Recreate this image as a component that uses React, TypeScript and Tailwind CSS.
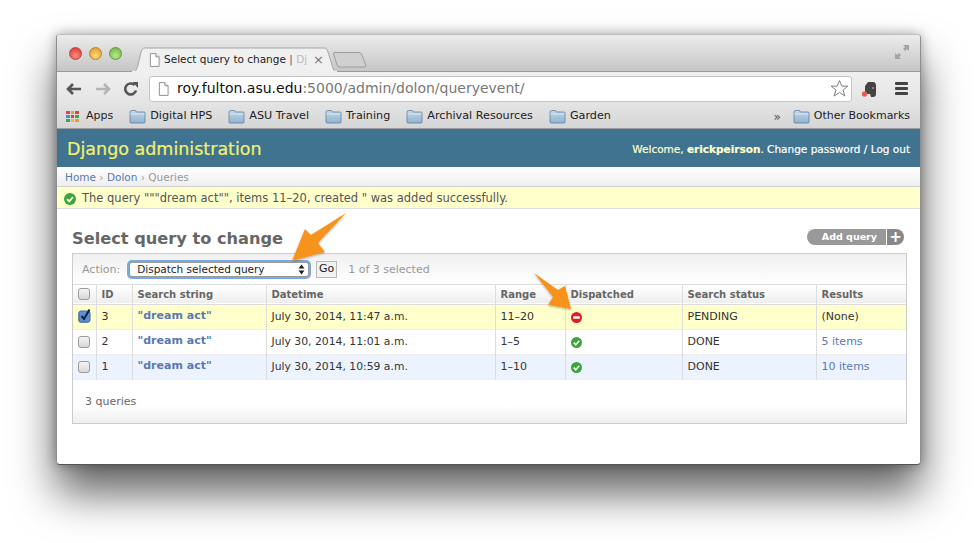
import React from "react";

const font = { fontFamily: '"DejaVu Sans", sans-serif' };

function Folder() {
  return (
    <svg width="17" height="15" viewBox="0 0 17 15" className="shrink-0">
      <defs>
        <linearGradient id="fg" x1="0" y1="0" x2="0" y2="1">
          <stop offset="0" stopColor="#c4d8ea" />
          <stop offset="1" stopColor="#8fb3d2" />
        </linearGradient>
      </defs>
      <path d="M1 3.5Q1 1.5 2.5 1.5H6Q7 1.5 7.5 3H15Q16 3 16 4V13Q16 14 15 14H2Q1 14 1 13Z" fill="url(#fg)" stroke="#5f7f9c" strokeWidth="0.8" />
      <path d="M1.5 5H15.5" stroke="#e4eef6" strokeWidth="0.8" />
    </svg>
  );
}

function Doc({ w = 12, h = 15 }: { w?: number; h?: number }) {
  return (
    <svg width={w} height={h} viewBox="0 0 12 15" className="shrink-0">
      <path d="M1.5 .5H7.5L11 4V14.5H1.5Z" fill="#fff" stroke="#8a8a8a" />
      <path d="M7.5 .5V4H11" fill="#eee" stroke="#8a8a8a" />
    </svg>
  );
}

function Ok({ s = 11 }: { s?: number }) {
  return (
    <svg width={s} height={s} viewBox="0 0 12 12" className="shrink-0">
      <circle cx="6" cy="6" r="6" fill="#3aa63a" />
      <path d="M3 6.2L5.2 8.4L9 4" fill="none" stroke="#fff" strokeWidth="1.8" />
    </svg>
  );
}

function No() {
  return (
    <svg width="11" height="11" viewBox="0 0 12 12" className="shrink-0">
      <circle cx="6" cy="6" r="6" fill="#dc2027" />
      <rect x="2.4" y="4.7" width="7.2" height="2.6" fill="#fff" />
    </svg>
  );
}

function Check({ on }: { on?: boolean }) {
  return (
    <span className="relative block w-[12px] h-[12px] rounded-[3px] border border-[#9a9a9a] bg-gradient-to-b from-[#f6f6f6] to-[#d8d8d8]">
      {on && (
        <svg width="16" height="16" viewBox="0 0 16 16" className="absolute left-[-2px] top-[-5px]">
          <rect x="2" y="4" width="11" height="11" rx="2" fill="#5b93d8" stroke="#3a6ea8" />
          <path d="M4.5 9L7 12L12.5 2.5" fill="none" stroke="#10243c" strokeWidth="2" />
        </svg>
      )}
    </span>
  );
}

const cols = [
  "w-[23px]",
  "w-[36px]",
  "w-[134px]",
  "w-[229px]",
  "w-[70px]",
  "w-[117px]",
  "w-[134px]",
  "w-[90px]",
];

const rows = [
  { id: "3", date: "July 30, 2014, 11:47 a.m.", range: "11–20", ok: false, status: "PENDING", res: "(None)", bg: "bg-[#ffffcc]", on: true, link: false },
  { id: "2", date: "July 30, 2014, 11:01 a.m.", range: "1–5", ok: true, status: "DONE", res: "5 items", bg: "bg-white", on: false, link: true },
  { id: "1", date: "July 30, 2014, 10:59 a.m.", range: "1–10", ok: true, status: "DONE", res: "10 items", bg: "bg-[#edf3fe]", on: false, link: true },
];

const bookmarks = ["Digital HPS", "ASU Travel", "Training", "Archival Resources", "Garden"];

export default function App() {
  return (
    <div className="relative w-[977px] h-[543px] overflow-hidden bg-white text-[11px] text-[#333]" style={font}>
      <div className="absolute left-[56px] top-[34px] w-[865px] h-[431px] rounded-[4px] bg-white shadow-[0_28px_44px_rgba(0,0,0,0.62),0_0_12px_rgba(0,0,0,0.32)] border border-[#8e8e8e] border-t-[#bdbdbd] border-b-[#555] flex flex-col overflow-hidden">
        {/* Tab strip */}
        <div className="h-[37px] shrink-0 flex items-end relative bg-gradient-to-b from-[#ececec] to-[#c6c6c6] border-b border-[#9a9a9a]">
          <div className="flex gap-[7px] mb-[11px] ml-[12px] items-center">
            <span className="w-[13px] h-[13px] rounded-full border border-[#b04a45] bg-[radial-gradient(circle_at_50%_70%,#ff8a80,#d5322c)]" />
            <span className="w-[13px] h-[13px] rounded-full border border-[#b5862c] bg-[radial-gradient(circle_at_50%_70%,#ffd97a,#d8932a)]" />
            <span className="w-[13px] h-[13px] rounded-full border border-[#5c9a3c] bg-[radial-gradient(circle_at_50%_70%,#b8e890,#6cae42)]" />
          </div>
          <div className="relative ml-[10px] w-[205px] h-[25px] mb-[-1px] flex items-center pl-[17px] text-[10.5px] text-[#222] z-10">
            <svg width="205" height="25" viewBox="0 0 205 25" className="absolute left-0 top-0">
              <path d="M0 25C4 25 5 22 6 18L9 5C10 2 11 1 13 1H192C194 1 195 2 196 5L200 18C201 22 202 25 205 25Z" fill="#f0f0f0" stroke="#a6a6a6" />
              <path d="M0 24.5H205" stroke="#f0f0f0" strokeWidth="1.5" />
            </svg>
            <span className="relative flex items-center gap-[4px]">
              <Doc w={11} h={14} />
              <span className="relative whitespace-nowrap w-[142px]">
                Select query to change <span className="text-[#555]">|</span> <span className="text-[#bbb]">Dj</span>
              </span>
              <span className="text-[#777] text-[13px] leading-none ml-[3px]">×</span>
            </span>
          </div>
          <svg width="34" height="17" viewBox="0 0 34 17" className="mb-[3px] ml-[-4px]">
            <path d="M1 1.5H26Q28 1.5 29 4L33 15Q33 16 31 16H7Q5 16 4 14L0.5 3Q0.5 1.5 1 1.5Z" fill="#d0d0d0" stroke="#9c9c9c" />
          </svg>
          <svg width="16" height="16" viewBox="0 0 16 16" className="absolute right-[10px] top-[9px]">
            <path d="M9 1H15V7L13 5L11 7L9 5L11 3Z" fill="#a3a3a3" />
            <path d="M1 9L3 11L5 9L7 11L5 13L7 15H1Z" fill="#a3a3a3" />
          </svg>
        </div>
        {/* Toolbar */}
        <div className="h-[31px] shrink-0 flex items-center pt-[2px] bg-gradient-to-b from-[#f0f0f0] to-[#e4e4e4]">
          <div className="w-[83px] flex items-center gap-[11px] pl-[8px] shrink-0">
            <svg width="18" height="14" viewBox="0 0 18 14" className="shrink-0">
              <path d="M16 7H3M8 2L3 7L8 12" fill="none" stroke="#555" strokeWidth="2.6" />
            </svg>
            <svg width="18" height="14" viewBox="0 0 18 14" className="shrink-0">
              <path d="M2 7H15M10 2L15 7L10 12" fill="none" stroke="#b4b4b4" strokeWidth="2.6" />
            </svg>
            <svg width="16" height="16" viewBox="0 0 16 16" className="shrink-0">
              <path d="M13 9.5A5.5 5.5 0 1 1 11.5 4" fill="none" stroke="#555" strokeWidth="2.6" />
              <path d="M9.5 1L15 1V7Z" fill="#555" />
            </svg>
          </div>
          <div className="w-[703px] h-[26px] shrink-0 rounded-[3px] border border-[#c4c4c4] bg-white flex items-center pl-[8px] pr-[2px] ml-[9px] text-[14px] whitespace-nowrap">
            <Doc w={11} h={14} />
            <span className="ml-[8px] text-[#111]">roy.fulton.asu.edu</span>
            <span className="text-[#777]">:5000/admin/dolon/queryevent/</span>
            <svg width="19" height="19" viewBox="0 0 24 24" className="ml-auto">
              <path d="M12 2L15 9H22.5L16.5 14L18.8 21.5L12 17L5.2 21.5L7.5 14L1.5 9H9Z" fill="#fff" stroke="#777" strokeWidth="1.2" />
            </svg>
          </div>
          <svg width="18" height="18" viewBox="0 0 18 18" className="ml-[9px] shrink-0">
            <path d="M4 6L7 2H12Q15 2 15 6V14Q15 17 12 17H10L9 14H6Q4 14 4 10Z" fill="#444" />
            <path d="M11 8H13" stroke="#ccc" />
            <circle cx="3.5" cy="14" r="2.7" fill="#e2604e" />
          </svg>
          <div className="ml-[16px] w-[13px] flex flex-col gap-[2px] shrink-0">
            <span className="h-[3px] bg-[#444] rounded-[1px]" />
            <span className="h-[3px] bg-[#444] rounded-[1px]" />
            <span className="h-[3px] bg-[#444] rounded-[1px]" />
          </div>
        </div>
        {/* Bookmarks */}
        <div className="h-[26px] shrink-0 flex items-center pt-[2px] bg-gradient-to-b from-[#e4e4e4] to-[#d6d6d6] border-b border-[#9c9c9c] text-[11px] text-[#222] pl-[9px]">
          <div className="grid grid-cols-3 gap-[1px] w-[13px] shrink-0">
            {["#d9453c", "#e8a020", "#d9453c", "#3f8fdc", "#d9453c", "#35a853", "#35a853", "#f2b920", "#e8a020"].map((c, i) => (
              <span key={i} className="h-[3px]" style={{ backgroundColor: c }} />
            ))}
          </div>
          <span className="ml-[7px]">Apps</span>
          <div className="flex items-center gap-[16px] ml-[16px] text-[11.2px]">
            {bookmarks.map((b) => (
              <span key={b} className="flex items-center gap-[4px] whitespace-nowrap">
                <Folder />
                {b}
              </span>
            ))}
          </div>
          <span className="ml-auto text-[#555] text-[12px]">»</span>
          <span className="flex items-center gap-[4px] ml-[12px] mr-[10px] whitespace-nowrap">
            <Folder />
            Other Bookmarks
          </span>
        </div>
        {/* Django header */}
        <div className="h-[38px] shrink-0 flex items-center justify-between pt-[4px] bg-[#3f7390] pl-[10px] pr-[10px]">
          <span className="text-[17.5px] text-[#f2f26e] leading-none [-webkit-text-stroke:0.2px_#f2f26e]">Django administration</span>
          <span className="text-[10.5px] text-[#ffffcc] [-webkit-text-stroke:0.2px]">
            Welcome, <b>erickpeirson</b>. <span className="text-white">Change password / Log out</span>
          </span>
        </div>
        {/* Breadcrumbs */}
        <div className="h-[20px] shrink-0 flex items-center pt-[2px] pl-[8px] text-[10.5px] bg-gradient-to-b from-white to-[#eeeeee] border-b border-[#d0d0d0] text-[#999]">
          <span className="text-[#5a78b4]">Home</span>
          <span>&nbsp;›&nbsp;</span>
          <span className="text-[#5a78b4]">Dolon</span>
          <span>&nbsp;›&nbsp;Queries</span>
        </div>
        {/* Message */}
        <div className="h-[22px] shrink-0 flex items-center gap-[6px] pl-[7px] pt-[2px] text-[11.5px] text-[#555] bg-[#ffffcc] border-b border-[#dddddd]">
          <Ok s={12} />
          <span>The query """dream act"", items 11–20, created " was added successfully.</span>
        </div>
        {/* Content */}
        <div className="flex-1 flex flex-col pl-[15px] pr-[13px]">
          <div className="h-[44px] shrink-0 flex items-end justify-between">
            <h1 className="text-[16.2px] font-bold text-[#666] leading-[22px] mb-[3px]">Select query to change</h1>
            <div className="flex items-center h-[16px] mb-[8px] mr-[3px] rounded-full overflow-hidden text-white text-[9.5px] font-bold">
              <span className="h-full w-[79px] bg-[#999] flex items-center justify-end pr-[9px]">Add query</span>
              <span className="h-full w-[17px] ml-[1px] bg-[#888] flex items-center justify-center text-[15px] font-bold leading-none">+</span>
            </div>
          </div>
          <div className="w-[835px] h-[171px] border border-[#cccccc] flex flex-col bg-white">
            <div className="h-[31px] shrink-0 flex items-center pl-[9px] bg-gradient-to-b from-[#f0f0f0] to-white border-b border-[#dddddd] text-[11px] text-[#999]">
              <span className="pt-[2px]">Action:</span>
              <span className="ml-[9px] w-[180px] h-[15px] rounded-[3px] border border-[#9a9a9a] bg-white shadow-[0_0_0_2px_#7aa9de] flex items-center justify-between pl-[7px] pr-[3px] pt-[1px] text-[10.5px] text-[#222]">
                Dispatch selected query
                <svg width="7" height="11" viewBox="0 0 7 11">
                  <path d="M3.5 0.5L6.5 4.5H0.5ZM3.5 10.5L0.5 6.5H6.5Z" fill="#222" />
                </svg>
              </span>
              <span className="ml-[7px] w-[21px] h-[17px] border border-[#b8b8b8] bg-[#f2f2f2] flex items-center justify-center text-[#222]">Go</span>
              <span className="ml-[11px] pt-[2px]">1 of 3 selected</span>
            </div>
            <table className="table-fixed border-collapse w-[833px] text-[11px] text-[#333]">
              <colgroup>
                {cols.map((c, i) => (
                  <col key={i} className={c} />
                ))}
              </colgroup>
              <thead>
                <tr className="h-[19px] bg-gradient-to-b from-white to-[#eeeeee] border-b border-[#dddddd] text-[#666] font-bold text-left">
                  <th className="pl-[5px]"><Check /></th>
                  {["ID", "Search string", "Datetime", "Range", "Dispatched", "Search status", "Results"].map((h) => (
                    <th key={h} className="pl-[5px] pt-[1px] border-l border-[#dddddd] font-bold text-[10px]">{h}</th>
                  ))}
                </tr>
              </thead>
              <tbody>
                {rows.map((r) => (
                  <tr key={r.id} className={`h-[25px] ${r.bg} border-b border-[#eeeeee]`}>
                    <td className="pl-[5px]"><Check on={r.on} /></td>
                    <td className="pl-[5px] pt-[1px] border-l border-[#dddddd]">{r.id}</td>
                    <td className="pl-[5px] border-l border-[#dddddd] font-bold text-[11px] text-[#5a78b4]">"dream act"</td>
                    <td className="pl-[5px] pt-[1px] border-l border-[#dddddd] text-[10.8px]">{r.date}</td>
                    <td className="pl-[5px] pt-[1px] border-l border-[#dddddd]">{r.range}</td>
                    <td className="pl-[5px] pt-[1px] border-l border-[#dddddd]">{r.ok ? <Ok /> : <No />}</td>
                    <td className="pl-[5px] pt-[1px] border-l border-[#dddddd]">{r.status}</td>
                    <td className={`pl-[5px] pt-[1px] border-l border-[#dddddd] ${r.link ? "text-[#5a78b4]" : ""}`}>{r.res}</td>
                  </tr>
                ))}
              </tbody>
            </table>
            <div className="flex-1 flex items-center pl-[12px] pt-[2px] bg-gradient-to-b from-white from-60% to-[#eeeeee] text-[#666] text-[11px]">3 queries</div>
          </div>
        </div>
      </div>
      {/* Annotation arrows */}
      <svg width="977" height="543" viewBox="0 0 977 543" className="absolute left-0 top-0 pointer-events-none">
        <defs>
          <filter id="as" x="-20%" y="-20%" width="140%" height="140%">
            <feDropShadow dx="0" dy="1" stdDeviation="1" floodColor="#000" floodOpacity="0.3" />
          </filter>
        </defs>
        <path d="M346 213L318 243L325 252L292 261L305 229L311 235Z" fill="#f7931e" filter="url(#as)" />
        <path d="M534 273L558 290L565 286L571 309L548 305L553 297Z" fill="#f7931e" filter="url(#as)" />
      </svg>
    </div>
  );
}
